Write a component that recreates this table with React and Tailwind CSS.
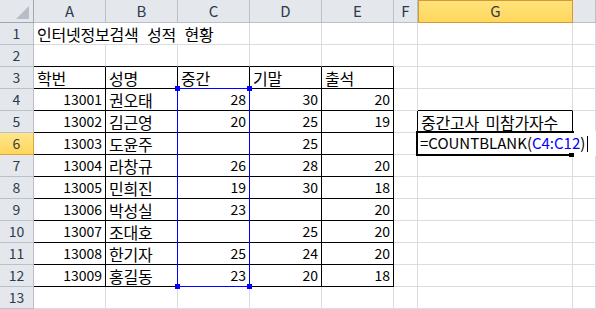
import React from 'react';

const COLS = ['A', 'B', 'C', 'D', 'E', 'F', 'G', 'H'];

const students = [
  ['13001', '권오태', '28', '30', '20'],
  ['13002', '김근영', '20', '25', '19'],
  ['13003', '도윤주', '', '25', ''],
  ['13004', '라창규', '26', '28', '20'],
  ['13005', '민희진', '19', '30', '18'],
  ['13006', '박성실', '23', '', '20'],
  ['13007', '조대호', '', '25', '20'],
  ['13008', '한기자', '25', '24', '20'],
  ['13009', '홍길동', '23', '20', '18'],
];

const font = { fontFamily: '"Noto Sans CJK KR", "Noto Sans", sans-serif' };

const grid = 'border-r border-b border-[#dadcdd]';
const black = 'border-r border-b border-black';

function Cell({ children, className = '', right = false, ko = false }) {
  return (
    <div
      className={`flex items-center overflow-visible whitespace-nowrap px-[3px] text-black ${
        ko ? 'text-[16px] tracking-[-0.2px]' : 'text-[14px]'
      } ${right ? 'justify-end' : 'justify-start'} ${className}`}
    >
      {children}
    </div>
  );
}

function RowHead({ n, active }) {
  return (
    <div
      className={`flex items-center justify-center text-[14px] ${
        active
          ? 'bg-gradient-to-b from-[#ffe68c] to-[#ffd65a] border-r border-b border-[#e0a43a] text-[#3a3a3a]'
          : 'bg-[#e4e8ed] border-r border-b border-[#b9c0c8] text-[#2f3b4a]'
      }`}
    >
      {n}
    </div>
  );
}

export default function App() {
  return (
    <div className="relative w-[596px] h-[309px] overflow-hidden bg-white" style={font}>
      <div className="grid grid-cols-[34px_72px_72px_72px_72px_72px_24px_155px_1fr] grid-rows-[23px_repeat(13,22px)]">
        {/* corner */}
        <div className="relative bg-[#e4e8ed] border-r border-b border-[#9fa7b1]">
          <div className="absolute right-[4px] bottom-[3px] w-0 h-0 border-l-[13px] border-l-transparent border-b-[13px] border-b-[#b6bdc6]" />
        </div>
        {COLS.map((c) => (
          <div
            key={c}
            className={`flex items-center justify-center text-[15px] ${
              c === 'G'
                ? 'bg-gradient-to-b from-[#ffe27a] to-[#ffd75c] border border-[#d6993a] text-[#2f3b4a]'
                : 'bg-[#e4e8ed] border-r border-b border-[#b9c0c8] text-[#2f3b4a]'
            }`}
          >
            {c === 'H' ? '' : c}
          </div>
        ))}

        {/* row 1 */}
        <RowHead n={1} />
        <Cell ko className={`col-span-3 ${grid} [word-spacing:5px]`}>
          인터넷정보검색 성적 현황
        </Cell>
        {['D', 'E', 'F', 'G', 'H'].map((c) => (
          <Cell key={c} className={grid} />
        ))}

        {/* row 2 */}
        <RowHead n={2} />
        {COLS.map((c, i) => (
          <Cell
            key={c}
            className={i < 5 ? 'border-r border-r-[#dadcdd] border-b border-b-black' : grid}
          />
        ))}

        {/* row 3 */}
        <RowHead n={3} />
        {['학번', '성명', '중간', '기말', '출석'].map((t) => (
          <Cell ko key={t} className={black}>
            {t}
          </Cell>
        ))}
        <Cell className={grid} />
        <Cell className={grid} />
        <Cell className={grid} />

        {/* rows 4-12 */}
        {students.map((s, r) => {
          const n = r + 4;
          return (
            <React.Fragment key={n}>
              <RowHead n={n} active={n === 6} />
              <Cell right className={black}>{s[0]}</Cell>
              <Cell ko className={black}>{s[1]}</Cell>
              <Cell right className={black}>{s[2]}</Cell>
              <Cell right className={black}>{s[3]}</Cell>
              <Cell right className={black}>{s[4]}</Cell>
              <Cell
                className={
                  n === 5 ? 'border-r border-r-black border-b border-b-[#dadcdd]' : grid
                }
              />
              <Cell
                ko={n === 5}
                className={
                  n === 4
                    ? 'border-r border-r-[#dadcdd] border-b border-b-black'
                    : n === 5
                    ? `${black} [word-spacing:3px]`
                    : grid
                }
              >
                {n === 5 ? '중간고사 미참가자수' : ''}
              </Cell>
              <Cell className={grid} />
            </React.Fragment>
          );
        })}

        {/* row 13 */}
        <RowHead n={13} />
        {COLS.map((c) => (
          <Cell key={c} className={grid} />
        ))}
      </div>

      {/* range reference highlight C4:C12 */}
      <div className="absolute left-[177px] top-[88px] w-[73px] h-[199px] border border-[#0000ff] pointer-events-none">
        <div className="absolute -left-[3px] -top-[3px] w-[5px] h-[5px] bg-[#0000ff]" />
        <div className="absolute -right-[3px] -top-[3px] w-[5px] h-[5px] bg-[#0000ff]" />
        <div className="absolute -left-[3px] -bottom-[3px] w-[5px] h-[5px] bg-[#0000ff]" />
        <div className="absolute -right-[3px] -bottom-[3px] w-[5px] h-[5px] bg-[#0000ff]" />
      </div>

      {/* in-cell edit G6 */}
      <div className="absolute left-[416px] top-[131px] w-[180px] h-[25px] bg-white">
        <div className="absolute left-0 top-0 w-[158px] h-[25px] border-l-2 border-t-2 border-b-2 border-black" />
        <div className="absolute left-[153px] top-[22px] w-[5px] h-[4px] bg-black" />
        <div className="relative flex h-full items-center pl-[4px] text-[15px] text-black whitespace-nowrap">
          <span>=COUNTBLANK(</span>
          <span className="text-[#0000ff]">C4:C12</span>
          <span>)</span>
          <span className="ml-[2px] inline-block w-px h-[16px] bg-black" />
        </div>
      </div>
    </div>
  );
}
